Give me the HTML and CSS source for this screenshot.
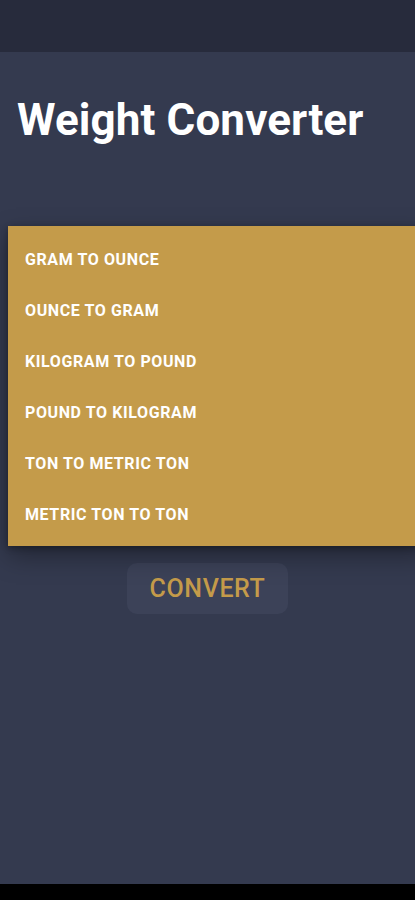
FILE: index.html
```html
<!DOCTYPE html>
<html lang="en">
<head>
    <meta charset="UTF-8">
    <meta name="viewport" content="width=device-width, initial-scale=1.0">
    <title>Weight Converter</title>
    <link rel="stylesheet" href="styles.css">
</head>
<body>
    <div class="status-bar"></div>
    <div class="screen">
        <h1 class="title">Weight Converter</h1>

        <div class="picker-area"></div>

        <div class="actions">
            <button class="convert-btn">CONVERT</button>
        </div>

        <ul class="menu">
            <li>GRAM TO OUNCE</li>
            <li>OUNCE TO GRAM</li>
            <li>KILOGRAM TO POUND</li>
            <li>POUND TO KILOGRAM</li>
            <li>TON TO METRIC TON</li>
            <li>METRIC TON TO TON</li>
        </ul>
    </div>
    <div class="nav-bar"></div>
</body>
</html>
```

FILE: styles.css
```css
* {
    box-sizing: border-box;
}
html, body {
    margin: 0;
    padding: 0;
}
body {
    font-family: Roboto, "Liberation Sans", sans-serif;
    background: #343a4f;
    width: 415px;
    height: 900px;
    display: flex;
    flex-direction: column;
    overflow: hidden;
}
.status-bar {
    height: 52px;
    background: #272b3c;
}
.screen {
    position: relative;
    flex: 1;
    background: #343a4f;
}
.title {
    margin: 0;
    padding: 42px 0 0 17px;
    color: #ffffff;
    font-size: 44px;
    font-weight: 700;
    line-height: 52px;
    letter-spacing: 0.1px;
}
.picker-area {
    height: 417px;
}
.actions {
    display: flex;
    justify-content: center;
}
.convert-btn {
    width: 161px;
    height: 51px;
    border: none;
    border-radius: 10px;
    background: #3c4258;
    color: #c49b4a;
    font-family: Roboto, "Liberation Sans", sans-serif;
    font-size: 25px;
    font-weight: 500;
    letter-spacing: 0.6px;
    cursor: pointer;
}
.menu {
    position: absolute;
    top: 174px;
    left: 8px;
    width: 420px;
    margin: 0;
    padding: 8px 0 7px;
    list-style: none;
    background: #c49b4a;
    box-shadow: 0 10px 24px rgba(0,0,0,0.35), 0 2px 6px rgba(0,0,0,0.3);
}
.menu li {
    height: 51px;
    padding: 0 17px;
    display: flex;
    align-items: center;
    color: #ffffff;
    font-size: 16px;
    font-weight: 700;
    letter-spacing: 0.6px;
}
.menu li:last-child {
    height: 50px;
}
.nav-bar {
    height: 16px;
    background: #000000;
}
```
